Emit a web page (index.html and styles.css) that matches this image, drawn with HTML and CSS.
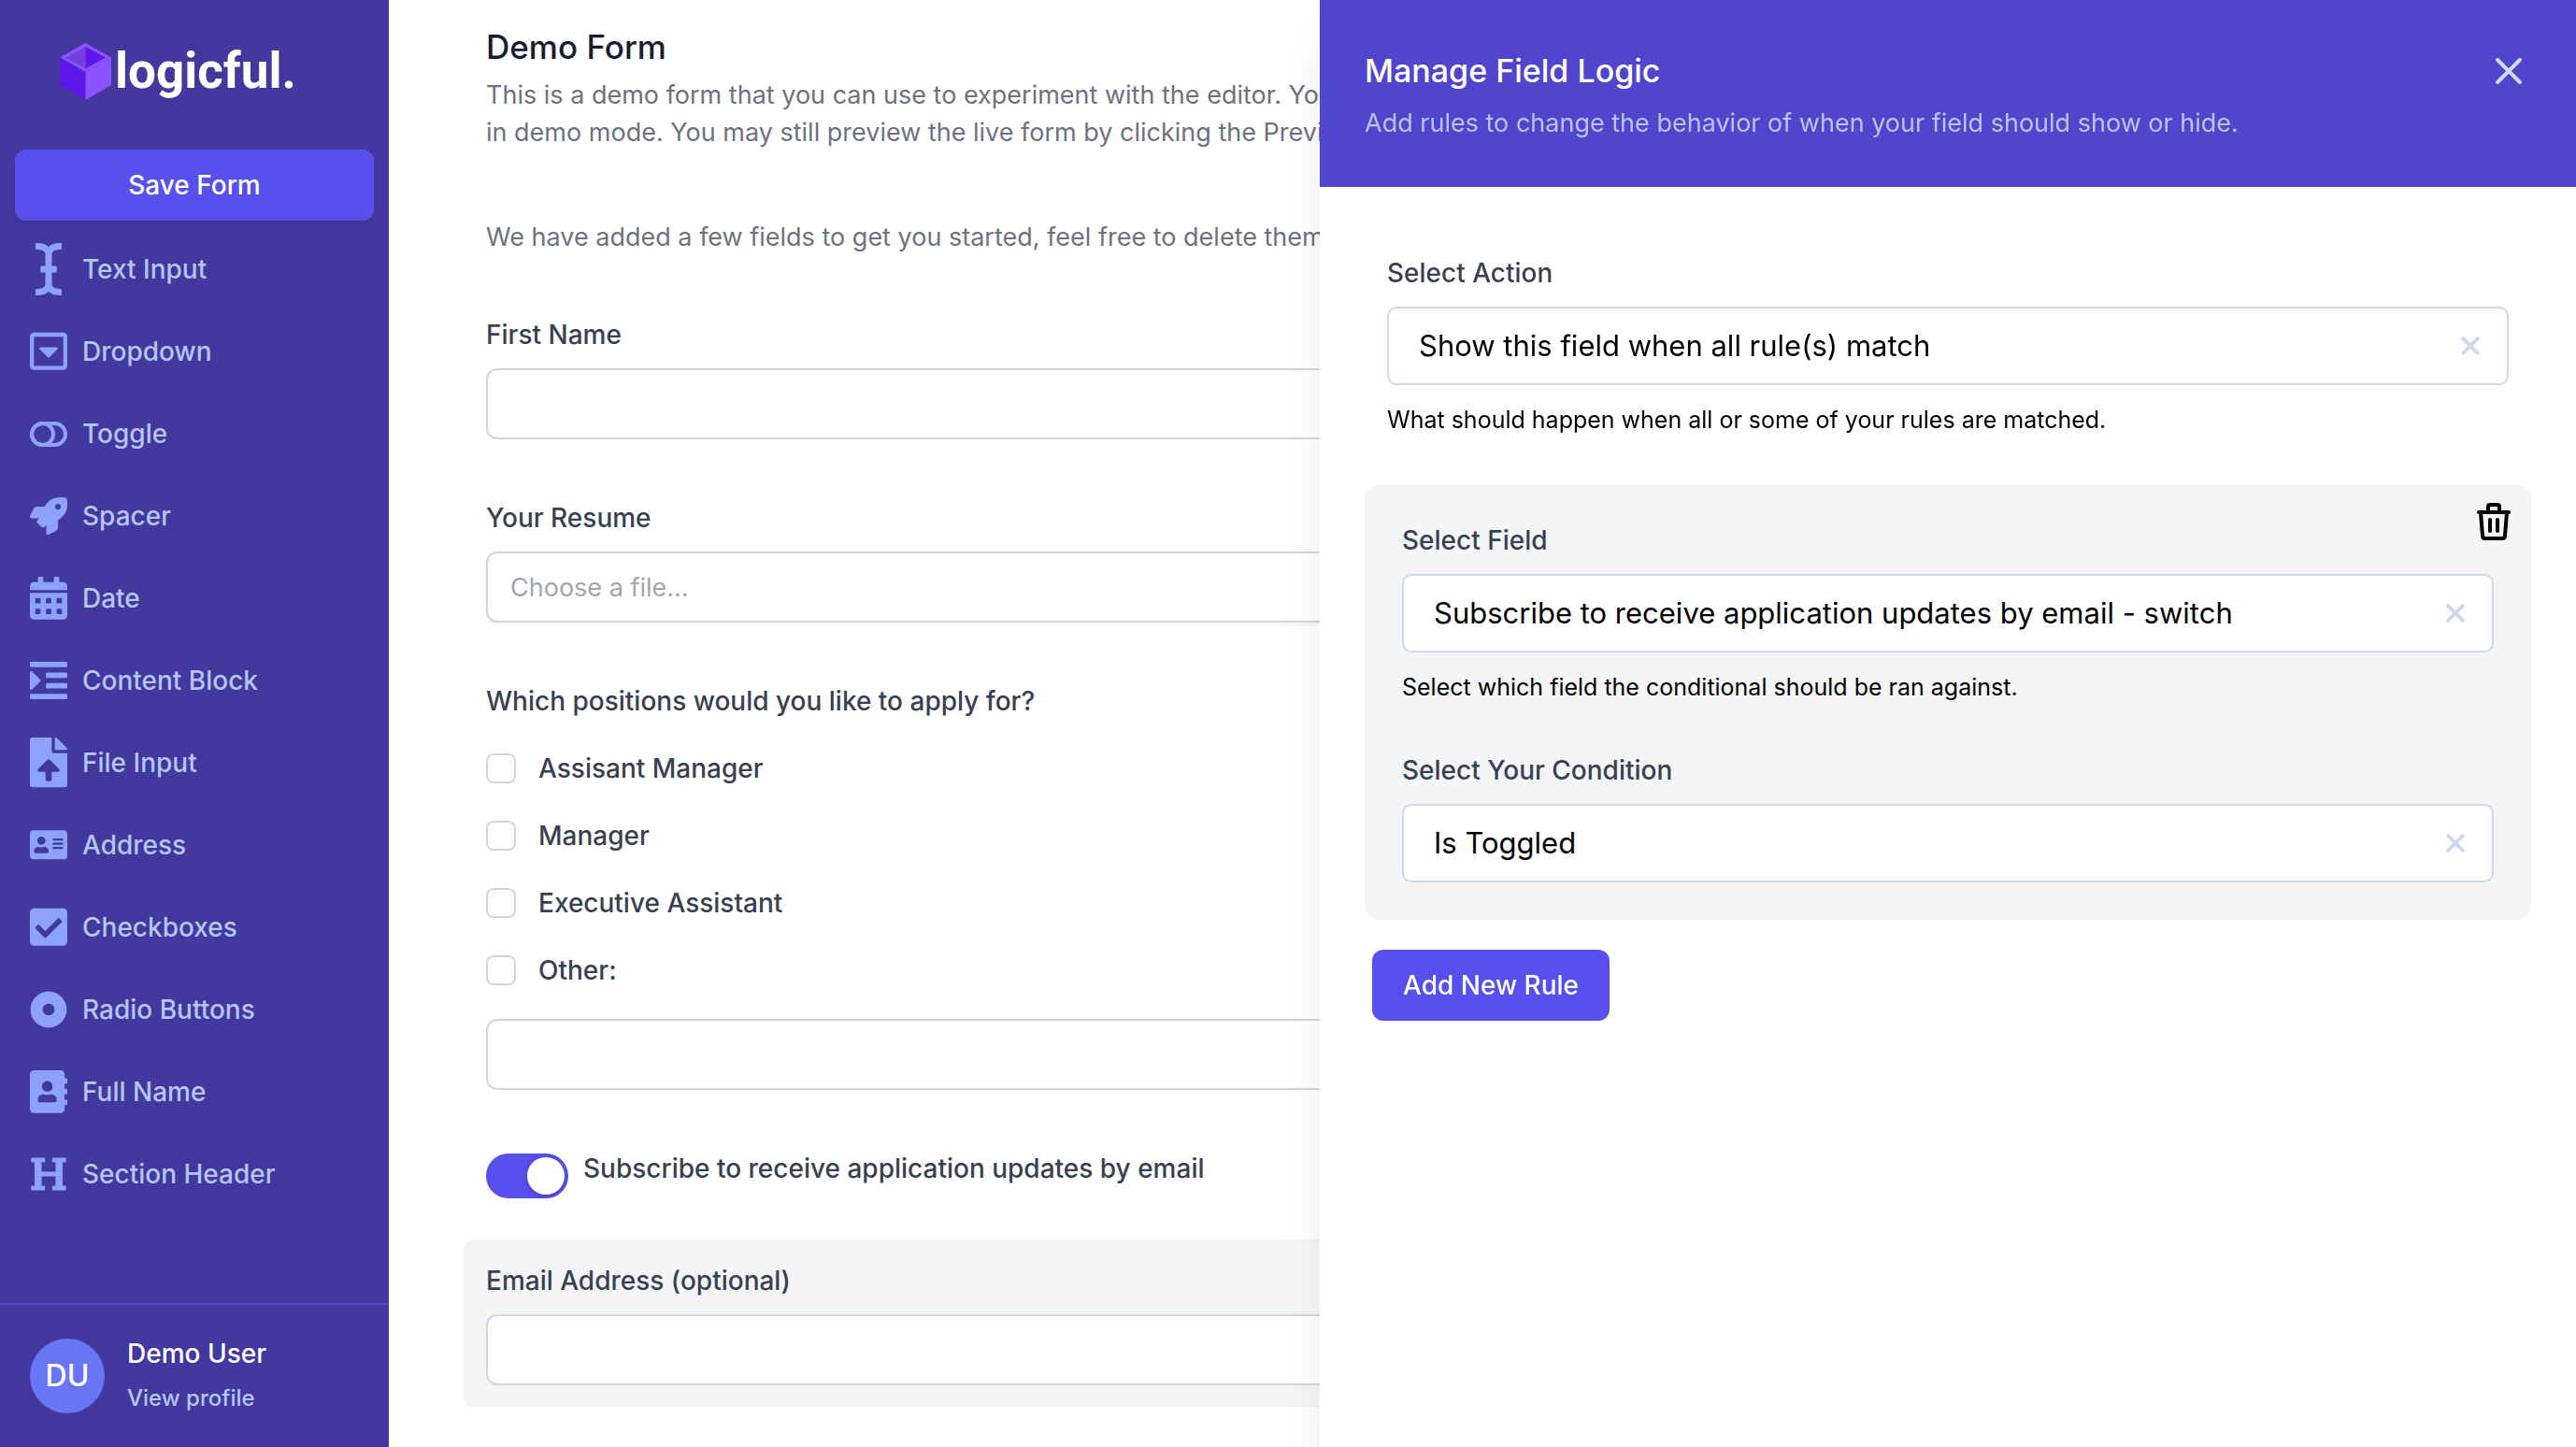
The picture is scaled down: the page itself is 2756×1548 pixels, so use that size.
FILE: index.html
```html
<!DOCTYPE html>
<html lang="en">
<head>
<meta charset="utf-8">
<meta name="viewport" content="width=device-width, initial-scale=1">
<title>Demo Form - logicful</title>
<link rel="stylesheet" href="styles.css">
</head>
<body>
<div class="app">
  <aside class="sidebar">
    <a class="brand" href="#">
      <svg class="brand-mark" viewBox="0 0 55 61" aria-hidden="true">
        <path fill="#8c52ff" d="M27.500 0 55 15.500 27.500 31 0 15.500z"/>
        <path fill="#7340de" d="M27.500 4v23.500L6 15.500z"/>
        <path fill="#5e17eb" d="M27.500 4v23.500L49 15.500z"/>
        <path fill="#5e17eb" d="M0 15.500 27.500 31v30L0 45z"/>
        <path fill="#8c52ff" d="M55 15.500 27.500 31v30L55 45z"/>
      </svg>
      <span class="brand-name">logicful.</span>
    </a>
    <button class="btn btn-save" type="button">Save Form</button>
    <nav class="tools" aria-label="Form elements">
      <a class="tool" href="#"><span class="tool-icon"><svg class="narrow" viewBox="0 0 256 512"><path d="M256 52.048V12.065C256 5.496 250.726.148 244.158.066 211.621-.344 166.469.011 128 37.959 90.266.736 46.979-.114 11.913.114 5.318.157 0 5.519 0 12.114v39.645c0 6.687 5.458 12.078 12.145 11.998C38.111 63.447 96 67.243 96 112.182V224H60c-6.627 0-12 5.373-12 12v40c0 6.627 5.373 12 12 12h36v112c0 44.932-56.075 48.031-83.950 47.959C5.404 447.942 0 453.306 0 459.952v39.993c0 6.569 5.274 11.917 11.842 11.999 32.537.409 77.689.054 116.158-37.894 37.734 37.223 81.021 38.073 116.087 37.845 6.595-.043 11.913-5.405 11.913-12V460.240c0-6.687-5.458-12.078-12.145-11.998C217.889 448.553 160 444.939 160 400V288h36c6.627 0 12-5.373 12-12v-40c0-6.627-5.373-12-12-12h-36V112.182c0-44.932 56.075-48.213 83.950-48.142 6.646.018 12.050-5.346 12.050-11.992z"/></svg></span>Text Input</a>
      <a class="tool" href="#"><span class="tool-icon"><svg viewBox="0 0 448 512"><path d="M125.100 208h197.800c10.700 0 16.100 13 8.500 20.500l-98.900 98.300c-4.700 4.700-12.200 4.700-16.900 0l-98.900-98.300c-7.700-7.500-2.300-20.500 8.400-20.500zM448 80v352c0 26.500-21.500 48-48 48H48c-26.500 0-48-21.500-48-48V80c0-26.500 21.500-48 48-48h352c26.500 0 48 21.500 48 48zm-48 346V86c0-3.300-2.700-6-6-6H54c-3.300 0-6 2.700-6 6v340c0 3.300 2.700 6 6 6h340c3.300 0 6-2.700 6-6z"/></svg></span>Dropdown</a>
      <a class="tool" href="#"><span class="tool-icon"><svg class="outline" viewBox="0 0 40 27"><rect x="2" y="2" width="36" height="23" rx="11.500"/><circle cx="13.500" cy="13.500" r="11.500"/></svg></span>Toggle</a>
      <a class="tool" href="#"><span class="tool-icon"><svg viewBox="0 0 512 512"><path d="M505.120 19.094c-1.189-5.531-6.658-11-12.207-12.188C460.716 0 435.507 0 410.407 0 307.175 0 245.269 55.203 199.052 128H94.838c-16.348.016-35.557 11.875-42.887 26.484L2.516 253.297A28.400 28.400 0 0 0 0 264a24.009 24.009 0 0 0 24.006 24h103.810l-22.474 22.469c-11.366 11.361-12.997 32.258 0 45.250l50.904 50.906c11.156 11.188 32.156 13.156 45.277 0l22.475-22.469V488a24.009 24.009 0 0 0 24.006 24 28.559 28.559 0 0 0 10.707-2.516l98.728-49.390c14.629-7.297 26.508-26.500 26.508-42.860V312.797c72.598-46.313 128.035-108.406 128.035-211.094.093-25.203.093-50.406-6.862-82.609zM384.040 168a40 40 0 1 1 40.010-40 40.023 40.023 0 0 1-40.010 40z"/></svg></span>Spacer</a>
      <a class="tool" href="#"><span class="tool-icon"><svg viewBox="0 0 448 512"><path fill-rule="evenodd" d="M0 464c0 26.500 21.500 48 48 48h352c26.500 0 48-21.500 48-48V192H0zM76 256h40q12 0 12 12v40q0 12-12 12H76q-12 0-12-12v-40q0-12 12-12zm128 0h40q12 0 12 12v40q0 12-12 12h-40q-12 0-12-12v-40q0-12 12-12zm128 0h40q12 0 12 12v40q0 12-12 12h-40q-12 0-12-12v-40q0-12 12-12zM76 384h40q12 0 12 12v40q0 12-12 12H76q-12 0-12-12v-40q0-12 12-12zm128 0h40q12 0 12 12v40q0 12-12 12h-40q-12 0-12-12v-40q0-12 12-12zm128 0h40q12 0 12 12v40q0 12-12 12h-40q-12 0-12-12v-40q0-12 12-12zM400 64h-48V16c0-8.800-7.200-16-16-16h-32c-8.800 0-16 7.200-16 16v48H160V16c0-8.800-7.200-16-16-16h-32c-8.800 0-16 7.200-16 16v48H48C21.500 64 0 85.500 0 112v48h448v-48c0-26.500-21.500-48-48-48z"/></svg></span>Date</a>
      <a class="tool" href="#"><span class="tool-icon"><svg viewBox="0 0 448 448"><rect width="448" height="64" rx="16"/><rect x="192" y="128" width="256" height="64" rx="16"/><rect x="192" y="256" width="256" height="64" rx="16"/><rect y="384" width="448" height="64" rx="16"/><path d="M27 117 123 213q11 11 0 22L27 331Q0 348 0 320V128Q0 100 27 117z"/></svg></span>Content Block</a>
      <a class="tool" href="#"><span class="tool-icon"><svg viewBox="0 0 384 512"><path d="M224 136V0H24C10.700 0 0 10.700 0 24v464c0 13.300 10.700 24 24 24h336c13.300 0 24-10.700 24-24V160H248c-13.200 0-24-10.800-24-24zm65.180 216.010H224v80c0 8.840-7.160 16-16 16h-32c-8.840 0-16-7.160-16-16v-80H94.820c-14.280 0-21.410-17.290-11.270-27.360l96.420-95.700c6.650-6.610 17.390-6.610 24.040 0l96.420 95.700c10.150 10.070 3.030 27.360-11.250 27.360zM377 105L279.100 7c-4.500-4.500-10.600-7-17-7H256v128h128v-6.100c0-6.300-2.500-12.400-7-16.900z"/></svg></span>File Input</a>
      <a class="tool" href="#"><span class="tool-icon"><svg viewBox="0 0 576 512"><path d="M528 32H48C21.500 32 0 53.500 0 80v352c0 26.500 21.500 48 48 48h480c26.500 0 48-21.500 48-48V80c0-26.500-21.500-48-48-48zm-352 96c35.300 0 64 28.700 64 64s-28.700 64-64 64-64-28.700-64-64 28.700-64 64-64zm112 236.800c0 10.600-10 19.200-22.400 19.200H86.400C74 384 64 375.400 64 364.800v-19.200c0-31.800 30.100-57.600 67.200-57.600h5c12.300 5.100 25.700 8 39.800 8s27.600-2.900 39.800-8h5c37.100 0 67.200 25.800 67.200 57.600v19.200zM512 312c0 4.400-3.600 8-8 8H360c-4.400 0-8-3.600-8-8v-16c0-4.400 3.600-8 8-8h144c4.400 0 8 3.600 8 8v16zm0-64c0 4.400-3.600 8-8 8H360c-4.400 0-8-3.600-8-8v-16c0-4.400 3.600-8 8-8h144c4.400 0 8 3.600 8 8v16zm0-64c0 4.400-3.600 8-8 8H360c-4.400 0-8-3.600-8-8v-16c0-4.400 3.600-8 8-8h144c4.400 0 8 3.600 8 8v16z"/></svg></span>Address</a>
      <a class="tool" href="#"><span class="tool-icon"><svg viewBox="0 0 448 512"><path d="M400 480H48c-26.510 0-48-21.490-48-48V80c0-26.510 21.490-48 48-48h352c26.510 0 48 21.490 48 48v352c0 26.510-21.490 48-48 48zm-204.686-98.059l184-184c6.248-6.248 6.248-16.379 0-22.627l-22.627-22.627c-6.248-6.248-16.379-6.249-22.628 0L184 302.745l-70.059-70.059c-6.248-6.248-16.379-6.248-22.628 0l-22.627 22.627c-6.248 6.248-6.248 16.379 0 22.627l104 104c6.249 6.250 16.379 6.250 22.628.001z"/></svg></span>Checkboxes</a>
      <a class="tool" href="#"><span class="tool-icon"><svg viewBox="0 0 512 512"><path d="M256 8C119.033 8 8 119.033 8 256s111.033 248 248 248 248-111.033 248-248S392.967 8 256 8zm80 248c0 44.112-35.888 80-80 80s-80-35.888-80-80 35.888-80 80-80 80 35.888 80 80z"/></svg></span>Radio Buttons</a>
      <a class="tool" href="#"><span class="tool-icon"><svg viewBox="0 0 448 512"><path d="M436 160c6.600 0 12-5.400 12-12v-40c0-6.600-5.400-12-12-12h-20V48c0-26.500-21.500-48-48-48H48C21.500 0 0 21.500 0 48v416c0 26.500 21.500 48 48 48h320c26.500 0 48-21.500 48-48v-48h20c6.600 0 12-5.400 12-12v-40c0-6.600-5.400-12-12-12h-20v-64h20c6.600 0 12-5.400 12-12v-40c0-6.600-5.400-12-12-12h-20v-64h20zm-228-32c35.300 0 64 28.700 64 64s-28.700 64-64 64-64-28.700-64-64 28.700-64 64-64zm112 236.800c0 10.600-10 19.200-22.400 19.200H118.400C106 384 96 375.400 96 364.800v-19.200c0-31.800 30.100-57.600 67.200-57.600h5c12.300 5.100 25.700 8 39.800 8s27.600-2.900 39.800-8h5c37.100 0 67.200 25.800 67.200 57.600v19.200z"/></svg></span>Full Name</a>
      <a class="tool" href="#"><span class="tool-icon"><svg viewBox="0 0 512 512"><path d="M448 96v320h32a16 16 0 0 1 16 16v32a16 16 0 0 1-16 16H320a16 16 0 0 1-16-16v-32a16 16 0 0 1 16-16h32V288H160v128h32a16 16 0 0 1 16 16v32a16 16 0 0 1-16 16H32a16 16 0 0 1-16-16v-32a16 16 0 0 1 16-16h32V96H32a16 16 0 0 1-16-16V48a16 16 0 0 1 16-16h160a16 16 0 0 1 16 16v32a16 16 0 0 1-16 16h-32v128h192V96h-32a16 16 0 0 1-16-16V48a16 16 0 0 1 16-16h160a16 16 0 0 1 16 16v32a16 16 0 0 1-16 16z"/></svg></span>Section Header</a>
    </nav>
    <a class="profile" href="#">
      <span class="avatar">DU</span>
      <span class="profile-text">
        <span class="profile-name">Demo User</span>
        <span class="profile-link">View profile</span>
      </span>
    </a>
  </aside>

  <main class="form-page">
    <h1 class="title">Demo Form</h1>
    <p class="intro">This is a demo form that you can use to experiment with the editor. Your changes will not be saved<br>in demo mode. You may still preview the live form by clicking the Preview button.</p>
    <p class="note">We have added a few fields to get you started, feel free to delete them.</p>

    <div class="field">
      <label class="label" for="first-name">First Name</label>
      <input class="input" id="first-name" type="text">
    </div>
    <div class="field">
      <label class="label" for="resume">Your Resume</label>
      <input class="input input-file" id="resume" type="text" placeholder="Choose a file..." readonly>
    </div>
    <fieldset class="choices">
      <legend class="label">Which positions would you like to apply for?</legend>
      <label class="choice"><input class="check" type="checkbox">Assisant Manager</label>
      <label class="choice"><input class="check" type="checkbox">Manager</label>
      <label class="choice"><input class="check" type="checkbox">Executive Assistant</label>
      <label class="choice"><input class="check" type="checkbox">Other:</label>
      <input class="input" type="text" aria-label="Other position">
    </fieldset>
    <div class="switch-row">
      <input class="switch" id="subscribe" type="checkbox" role="switch" checked>
      <label class="label" for="subscribe">Subscribe to receive application updates by email</label>
    </div>
    <div class="field field-active">
      <label class="label" for="email">Email Address (optional)</label>
      <input class="input" id="email" type="email">
    </div>
  </main>
</div>

<section class="drawer" aria-labelledby="drawer-title">
  <header class="drawer-head">
    <div class="drawer-top">
      <h2 class="drawer-title" id="drawer-title">Manage Field Logic</h2>
      <button class="icon-btn close" type="button" aria-label="Close"><svg viewBox="0 0 28 28"><path d="M2 2 26 26M26 2 2 26"/></svg></button>
    </div>
    <p class="drawer-sub">Add rules to change the behavior of when your field should show or hide.</p>
  </header>
  <div class="drawer-body">
    <div class="rule-field action">
      <label class="label" for="action">Select Action</label>
      <div class="picker">
        <select id="action"><option>Show this field when all rule(s) match</option></select>
        <button class="icon-btn clear" type="button" aria-label="Clear action"><svg viewBox="0 0 20 20"><path d="M1 1 19 19M19 1 1 19"/></svg></button>
      </div>
      <p class="help">What should happen when all or some of your rules are matched.</p>
    </div>
    <div class="rule">
      <button class="icon-btn trash" type="button" aria-label="Delete rule"><svg viewBox="0 0 36 40"><path d="M2 10H34M12 9V4q0-2 2-2h8q2 0 2 2v5M4 10 6 35q0 3 3 3h18q3 0 3-3L32 10M14 18V30M22 18V30"/></svg></button>
      <div class="rule-field">
        <label class="label" for="rule-field">Select Field</label>
        <div class="picker">
          <select id="rule-field"><option>Subscribe to receive application updates by email - switch</option></select>
          <button class="icon-btn clear" type="button" aria-label="Clear field"><svg viewBox="0 0 20 20"><path d="M1 1 19 19M19 1 1 19"/></svg></button>
        </div>
        <p class="help">Select which field the conditional should be ran against.</p>
      </div>
      <div class="rule-field">
        <label class="label" for="condition">Select Your Condition</label>
        <div class="picker">
          <select id="condition"><option>Is Toggled</option></select>
          <button class="icon-btn clear" type="button" aria-label="Clear condition"><svg viewBox="0 0 20 20"><path d="M1 1 19 19M19 1 1 19"/></svg></button>
        </div>
      </div>
    </div>
    <button class="btn btn-add" type="button">Add New Rule</button>
  </div>
</section>
</body>
</html>
```
FILE: styles.css
```css
*, *::before, *::after { box-sizing: border-box; }

body {
  margin: 0;
  background: #fff;
  color: #374151;
  font-family: Inter, "Liberation Sans", sans-serif;
  font-size: 28px;
  line-height: 40px;
}

h1, h2, p, fieldset, legend { margin: 0; padding: 0; border: 0; }
a { color: inherit; text-decoration: none; }
button, input, select { font: inherit; }
svg { display: block; }

.app { display: flex; min-height: 100vh; overflow: hidden; }

/* Sidebar */
.sidebar {
  display: flex;
  flex-direction: column;
  flex: none;
  width: 416px;
  background: #42389d;
}
.brand {
  display: flex;
  align-items: center;
  gap: 4px;
  height: 160px;
  padding: 0 0 8px 64px;
}
.brand-mark { width: 55px; height: 61px; }
.brand-name {
  color: #fff;
  font-family: Roboto, sans-serif;
  font-size: 53px;
  font-weight: 700;
  line-height: 60px;
}
.btn {
  height: 76px;
  border: 0;
  border-radius: 12px;
  background: #5850ec;
  color: #fff;
  font-weight: 500;
}
.btn-save { margin: 0 16px 8px; box-shadow: 0 2px 4px rgba(0, 0, 0, 0.05); }
.tools { flex: 1; }
.tool {
  display: flex;
  align-items: center;
  gap: 16px;
  height: 88px;
  padding: 0 32px;
  color: #b4c6fc;
  font-weight: 500;
}
.tool-icon { display: flex; justify-content: center; width: 40px; }
.tool-icon svg { width: 40px; fill: #8da2fb; }
.tool-icon .narrow { width: 28px; }
.tool-icon .outline { fill: none; stroke: #8da2fb; stroke-width: 4; }
.profile {
  display: flex;
  align-items: center;
  gap: 24px;
  height: 154px;
  padding: 0 32px;
  border-top: 2px solid #5145cd;
}
.avatar {
  width: 80px;
  height: 80px;
  border-radius: 50%;
  background: #6875f5;
  color: #fff;
  font-size: 32px;
  font-weight: 500;
  line-height: 80px;
  text-align: center;
}
.profile-text { display: flex; flex-direction: column; gap: 8px; font-weight: 500; }
.profile-name { color: #fff; }
.profile-link { color: #b4c6fc; font-size: 24px; }

/* Form */
.form-page {
  display: flex;
  flex-direction: column;
  flex: 1;
  padding: 22px 104px 40px;
}
.title { color: #161e2e; font-size: 35px; font-weight: 500; line-height: 56px; }
.intro, .note { color: #6b7280; font-size: 27px; }
.intro { margin: 4px 0 72px; }
.note { margin-bottom: 64px; }
.field { display: flex; flex-direction: column; gap: 16px; margin-bottom: 64px; }
.label { color: #374151; font-weight: 500; }
.input {
  width: 100%;
  height: 76px;
  padding: 0 24px;
  border: 2px solid #d2d6dc;
  border-radius: 12px;
  background: #fff;
}
.input::placeholder { color: #a0a6b1; opacity: 1; }
.input-file { box-shadow: 0 2px 4px rgba(0, 0, 0, 0.05); font-size: 27px; }
.choices { display: flex; flex-direction: column; gap: 32px; margin-bottom: 64px; }
.choices .label { padding-bottom: 32px; }
.choice { display: flex; align-items: center; gap: 24px; font-weight: 500; }
.check {
  width: 32px;
  height: 32px;
  margin: 0;
  border: 2px solid #d2d6dc;
  border-radius: 8px;
  background: #fff;
  appearance: none;
}
.switch-row { display: flex; gap: 16px; margin-bottom: 44px; }
.switch {
  width: 88px;
  height: 48px;
  margin: 4px 0 0;
  padding: 4px;
  border-radius: 24px;
  background: #5850ec;
  appearance: none;
}
.switch::before {
  content: "";
  display: block;
  width: 40px;
  height: 40px;
  margin-left: auto;
  border-radius: 50%;
  background: #fff;
  box-shadow: 0 2px 6px rgba(0, 0, 0, 0.2);
}
.field-active {
  margin: 0 -24px;
  padding: 24px;
  border-radius: 12px;
  background: #f4f5f7;
}

/* Logic drawer, slides over the form */
.drawer {
  position: fixed;
  top: 0;
  right: 0;
  bottom: 0;
  width: min(1344px, 100%);
  background: #fff;
  box-shadow: 0 40px 50px -10px rgba(0, 0, 0, 0.1), 0 20px 20px -10px rgba(0, 0, 0, 0.04);
}
.drawer-head { padding: 48px 56px 48px 48px; background: #5145cd; }
.drawer-top { display: flex; align-items: center; justify-content: space-between; }
.drawer-title { color: #fff; font-size: 34px; font-weight: 500; line-height: 56px; }
.drawer-sub { margin-top: 8px; color: #b4c6fc; font-size: 27px; }
.icon-btn { padding: 0; border: 0; background: none; }
.icon-btn svg { fill: none; stroke: currentColor; stroke-linecap: round; }
.close { width: 28px; margin-right: 2px; color: #cddbfe; }
.close svg { stroke-width: 4; }
.drawer-body { padding: 72px 48px; }
.rule-field { display: flex; flex-direction: column; }
.action { margin: 0 24px 48px; }
.picker {
  display: flex;
  align-items: center;
  height: 84px;
  margin-top: 16px;
  padding: 0 29px 0 32px;
  border: 2px solid #cdd9ed;
  border-radius: 10px;
  background: #fff;
}
.picker select {
  flex: 1;
  min-width: 0;
  padding: 0;
  border: 0;
  background: none;
  color: #000;
  font-size: 31px;
  appearance: none;
}
.clear { width: 20px; color: #cdd9ed; }
.clear svg { stroke-width: 4; stroke-linecap: butt; }
.help { margin-top: 16px; color: #000; font-size: 25px; line-height: 42px; }
.rule {
  position: relative;
  display: flex;
  flex-direction: column;
  gap: 48px;
  padding: 40px;
  border-radius: 16px;
  background: #f4f5f7;
}
.trash { position: absolute; top: 20px; right: 22px; width: 36px; color: #000; }
.trash svg { stroke-width: 4; stroke-linejoin: round; }
.btn-add { margin: 32px 8px 0; padding: 0 33px; }
```
